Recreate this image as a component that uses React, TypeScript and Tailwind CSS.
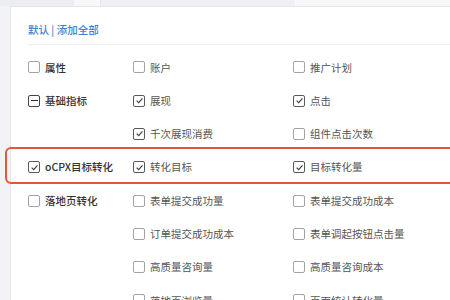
import React from "react";

type State = "none" | "checked" | "minus";

function Box({ state }: { state: State }) {
  if (state === "checked") {
    return (
      <span className="flex h-[12px] w-[12px] shrink-0 items-center justify-center rounded-[2px] border border-[#5a5a5a] bg-white">
        <svg width="9" height="9" viewBox="0 0 10 10">
          <path d="M1.8 5.2 L4.1 7.4 L8.3 2.6" fill="none" stroke="#444" strokeWidth="1.3" />
        </svg>
      </span>
    );
  }
  if (state === "minus") {
    return (
      <span className="flex h-[12px] w-[12px] shrink-0 items-center justify-center rounded-[2px] border border-[#444] bg-white">
        <span className="h-[1.3px] w-[7px] bg-[#333]" />
      </span>
    );
  }
  return <span className="h-[12px] w-[12px] shrink-0 rounded-[2px] border border-[#a3a3a3] bg-white" />;
}

function Item({ label, state, main }: { label?: string; state?: State; main?: boolean }) {
  if (!label) return <div />;
  return (
    <div className="flex items-center gap-[5px]">
      <Box state={state ?? "none"} />
      <span
        className={
          main
            ? "text-[10.5px] font-medium text-[#333] whitespace-nowrap"
            : "text-[10.5px] text-[#555] whitespace-nowrap"
        }
      >
        {label}
      </span>
    </div>
  );
}

const rows: [string | undefined, State, string, State, string, State][] = [
  ["属性", "none", "账户", "none", "推广计划", "none"],
  ["基础指标", "minus", "展现", "checked", "点击", "checked"],
  [undefined, "none", "千次展现消费", "checked", "组件点击次数", "none"],
  ["oCPX目标转化", "checked", "转化目标", "checked", "目标转化量", "checked"],
  ["落地页转化", "none", "表单提交成功量", "none", "表单提交成功成本", "none"],
  [undefined, "none", "订单提交成功成本", "none", "表单调起按钮点击量", "none"],
  [undefined, "none", "高质量咨询量", "none", "高质量咨询成本", "none"],
  [undefined, "none", "落地页浏览量", "none", "页面统计转化量", "none"],
];

export default function App() {
  return (
    <div
      className="relative h-[300px] w-[450px] overflow-hidden bg-[#f1f3f6]"
      style={{ fontFamily: '"Noto Sans CJK SC", "Noto Sans", sans-serif' }}
    >
      <div className="flex h-[6px]">
        <div className="w-[74px] bg-[#eceef2]" />
        <div className="w-[26px] bg-[#f7f8fa]" />
        <div className="w-[195px] rounded-br-[3px] border-l border-[#e4e6ea] bg-[#eef0f3]" />
        <div className="flex-1 bg-[#f7f8fa]" />
      </div>
      <div className="ml-[10px] h-[294px] border-l border-t border-[#e3e5e8] bg-white pl-[17px]">
        <div className="pt-[15px] text-[10.5px] font-medium text-[#3e7fd6]">默认 | 添加全部</div>
        <div className="mt-[6px] h-px bg-[#eceef0]" />
        <div className="pt-[6px]">
          {rows.map((r, i) => (
            <div key={i} className="grid h-[33.3px] grid-cols-[105px_160px_1fr] items-center">
              <Item label={r[0]} state={r[1]} main />
              <Item label={r[2]} state={r[3]} />
              <Item label={r[4]} state={r[5]} />
            </div>
          ))}
        </div>
      </div>
      <div className="absolute left-[5px] top-[147px] h-[37px] w-[470px] rounded-[6px] border-2 border-[#e4553d]" />
    </div>
  );
}
